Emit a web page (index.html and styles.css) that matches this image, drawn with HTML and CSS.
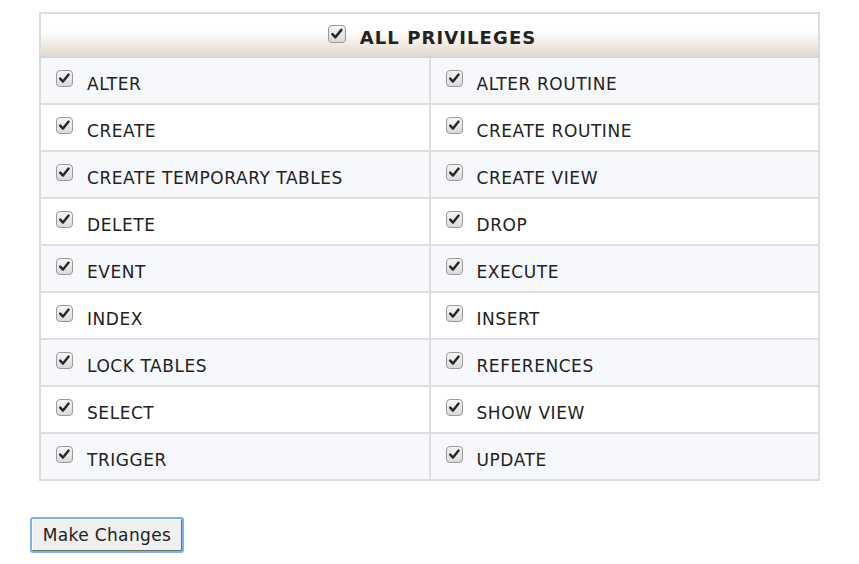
FILE: index.html
```html
<!DOCTYPE html>
<html>
<head>
<meta charset="utf-8">
<link rel="stylesheet" href="styles.css">
</head>
<body>
<div class="page">
  <table class="priv">
    <thead>
      <tr>
        <th colspan="2"><label class="item head"><svg class="cb" viewBox="0 0 17 17"><defs><linearGradient id="g0" x1="0" y1="0" x2="0" y2="1"><stop offset="0" stop-color="#f6f6f6"/><stop offset="1" stop-color="#d9d9d9"/></linearGradient></defs><rect x="0.5" y="0.5" width="16" height="16" rx="3.5" fill="url(#g0)" stroke="#9a9a9a"/><path d="M4.2 8.6 L7 11.6 L12.6 4.6" fill="none" stroke="#262626" stroke-width="2.4" stroke-linecap="round" stroke-linejoin="round"/></svg><span>ALL PRIVILEGES</span></label></th>
      </tr>
    </thead>
    <tbody id="rows"></tbody>
  </table>
  <button class="btn" type="button">Make Changes</button>
</div>
<script>
var pairs=[["ALTER","ALTER ROUTINE"],["CREATE","CREATE ROUTINE"],["CREATE TEMPORARY TABLES","CREATE VIEW"],["DELETE","DROP"],["EVENT","EXECUTE"],["INDEX","INSERT"],["LOCK TABLES","REFERENCES"],["SELECT","SHOW VIEW"],["TRIGGER","UPDATE"]];
var cb='<svg class="cb" viewBox="0 0 17 17"><rect x="0.5" y="0.5" width="16" height="16" rx="3.5" fill="url(#g0)" stroke="#9a9a9a"/><path d="M4.2 8.6 L7 11.6 L12.6 4.6" fill="none" stroke="#262626" stroke-width="2.4" stroke-linecap="round" stroke-linejoin="round"/></svg>';
var h='';
pairs.forEach(function(p){h+='<tr>';p.forEach(function(t){h+='<td><label class="item">'+cb+'<span>'+t+'</span></label></td>';});h+='</tr>';});
document.getElementById('rows').innerHTML=h;
</script>
</body>
</html>
```
FILE: styles.css
```css
html, body {
  margin: 0;
  padding: 0;
  background: #ffffff;
}
body {
  font-family: "DejaVu Sans", Verdana, sans-serif;
  color: #222;
}
.page {
  padding: 12px 0 0 39px;
}
.priv {
  width: 781px;
  border-collapse: collapse;
  border: 2px solid #dcdcdc;
  table-layout: fixed;
}
.priv th {
  height: 42px;
  padding: 0 0 0 5px;
  background: linear-gradient(to bottom, #ffffff 0%, #ffffff 40%, #e4d7cd 100%);
  border-bottom: 2px solid #d6d6d6;
  text-align: center;
}
.priv td {
  height: 45px;
  padding: 0 0 0 15px;
  border: 2px solid #dedede;
  border-left: 0;
  vertical-align: middle;
}
.priv td + td {
  border-left: 2px solid #dedede;
}
.priv tbody tr:nth-child(odd) td {
  background: #f6f8fc;
}
.item {
  display: inline-flex;
  align-items: center;
  gap: 14px;
  font-size: 17px;
  line-height: 20px;
  letter-spacing: 0.55px;
}
.item .cb {
  width: 17px;
  height: 17px;
  flex: none;
  position: relative;
  top: -1px;
}
.item span {
  position: relative;
  top: 5px;
}
.head {
  gap: 14px;
  font-weight: bold;
  font-size: 18px;
  letter-spacing: 1.1px;
}
.head .cb {
  width: 18px;
  height: 18px;
  top: 0px;
}
.head span {
  top: 4px;
}
.btn {
  display: block;
  margin: 36px 0 0 -9px;
  width: 154px;
  height: 36px;
  padding: 0;
  font-family: "DejaVu Sans", Verdana, sans-serif;
  font-size: 17px;
  letter-spacing: 0.35px;
  color: #222;
  background: #efefef;
  border: 2px solid #80aef0;
  border-radius: 3px;
  box-shadow: inset -1px -1px 0 #6e6e6e, inset 1px 1px 0 #fafafa;
}
```
